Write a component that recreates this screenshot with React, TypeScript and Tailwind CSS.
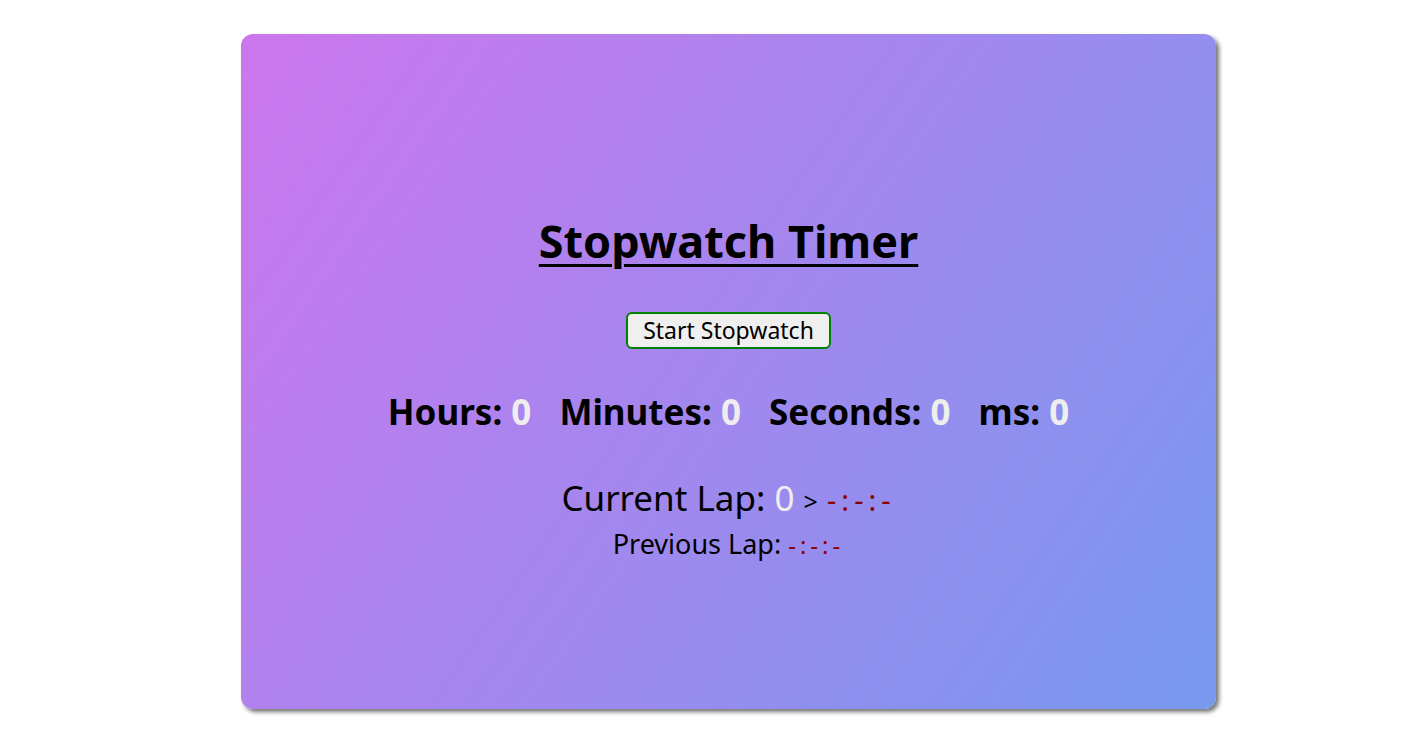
import React from 'react';

function TimeUnit({ label, value }: { label: string; value: number }) {
  return (
    <span className="font-bold">
      {label}: <span className="text-[#eeeeee]">{value}</span>
    </span>
  );
}

export default function App() {
  const font = { fontFamily: '"Trebuchet MS", "Noto Sans", "DejaVu Sans", sans-serif' };

  return (
    <div className="min-h-screen bg-white pt-[34px] pl-[241px]" style={font}>
      <div className="w-[975px] h-[675px] rounded-xl bg-[linear-gradient(125deg,#cd76ee,#7799ee)] shadow-[3px_3px_4px_rgba(0,0,0,0.55)] flex flex-col items-center pt-[179px] text-black">
        <h1 className="text-[45px] font-bold underline decoration-[3px] underline-offset-[6px] leading-[56px]">
          Stopwatch Timer
        </h1>

        <button className="mt-[43px] h-[37px] px-[15px] rounded-md border-2 border-[#008000] bg-[#efefef] text-[23px] leading-none">
          Start Stopwatch
        </button>

        <div className="mt-[42px] flex gap-[28px] text-[35px] leading-[42px]">
          <TimeUnit label="Hours" value={0} />
          <TimeUnit label="Minutes" value={0} />
          <TimeUnit label="Seconds" value={0} />
          <TimeUnit label="ms" value={0} />
        </div>

        <div className="mt-[44px] text-[35px] leading-[42px]">
          Current Lap: <span className="text-[#eeeeee]">0</span>{' '}
          <span className="text-[25px]">&gt;</span>{' '}
          <span className="text-[29px] tracking-[5px] text-[#8b0000]">-:-:-</span>
        </div>

        <div className="mt-[5px] text-[27px] leading-[34px]">
          Previous Lap: <span className="text-[#8b0000] text-[24px] tracking-[4px]">-:-:-</span>
        </div>
      </div>
    </div>
  );
}
